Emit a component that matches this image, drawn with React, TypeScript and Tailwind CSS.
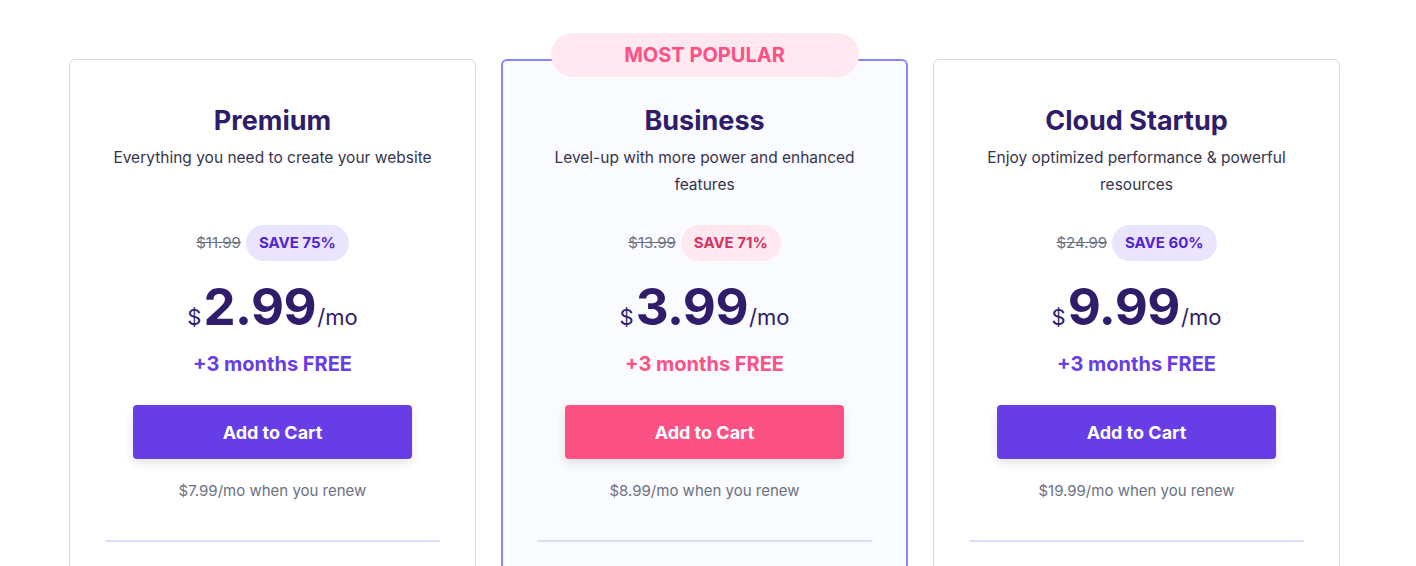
const plans = [
  {
    name: "Premium",
    desc: "Everything you need to create your website",
    oldPrice: "$11.99",
    save: "SAVE 75%",
    price: "2.99",
    renew: "$7.99/mo when you renew",
    popular: false,
  },
  {
    name: "Business",
    desc: "Level-up with more power and enhanced features",
    oldPrice: "$13.99",
    save: "SAVE 71%",
    price: "3.99",
    renew: "$8.99/mo when you renew",
    popular: true,
  },
  {
    name: "Cloud Startup",
    desc: "Enjoy optimized performance & powerful resources",
    oldPrice: "$24.99",
    save: "SAVE 60%",
    price: "9.99",
    renew: "$19.99/mo when you renew",
    popular: false,
  },
];

type Plan = (typeof plans)[number];

function PlanCard({ plan }: { plan: Plan }) {
  const p = plan.popular;
  return (
    <div
      className={
        p
          ? "relative rounded-[6px] border-2 border-[#8c85ff] bg-[#fafbff] px-[34px] pt-[42px] pb-[120px]"
          : "relative rounded-[6px] border border-[#dadce0] bg-white px-[35px] pt-[43px] pb-[120px]"
      }
    >
      {p && (
        <div className="absolute left-1/2 top-[-28px] flex h-[44px] w-[308px] -translate-x-1/2 items-center justify-center rounded-full bg-[#ffe8ef] text-[20px] font-bold text-[#fc5185]">
          MOST POPULAR
        </div>
      )}
      <div className="flex flex-col items-center text-center">
        <h2 className="text-[27px] font-bold leading-[36px] text-[#2f1c6a]">{plan.name}</h2>
        <p className="mt-[5px] min-h-[54px] max-w-[330px] text-[15.5px] leading-[27px] text-[#36344d]">{plan.desc}</p>
        <div className="mt-[27px] flex items-center gap-[5px]">
          <span className="text-[15px] text-[#6d7081] line-through">{plan.oldPrice}</span>
          <span
            className={
              p
                ? "flex h-[36px] items-center rounded-full bg-[#ffe8ef] px-[13px] text-[15px] font-bold text-[#d63163]"
                : "flex h-[36px] items-center rounded-full bg-[#ebe4ff] px-[13px] text-[15px] font-bold text-[#5025d1]"
            }
          >
            {plan.save}
          </span>
        </div>
        <div className="mt-[16px] flex h-[60px] items-baseline text-[#2f1c6a] leading-[60px]">
          <span className="mr-[2px] text-[22px]">$</span>
          <span className="text-[51px] font-bold tracking-[-0.5px]">{plan.price}</span>
          <span className="ml-[1px] text-[22px]">/mo</span>
        </div>
        <div className={p ? "mt-[13px] text-[20px] font-bold leading-[28px] text-[#fc5185]" : "mt-[13px] text-[20px] font-bold leading-[28px] text-[#673de6]"}>
          +3 months FREE
        </div>
        <button
          className={
            p
              ? "mt-[27px] h-[54px] w-[279px] rounded-[4px] bg-[#fc5185] text-[18px] font-bold text-white shadow-[0_4px_10px_rgba(29,30,32,0.12)]"
              : "mt-[27px] h-[54px] w-[279px] rounded-[4px] bg-[#673de6] text-[18px] font-bold text-white shadow-[0_4px_10px_rgba(29,30,32,0.12)]"
          }
        >
          Add to Cart
        </button>
        <p className="mt-[20px] text-[15px] leading-[24px] text-[#6d7081]">{plan.renew}</p>
      </div>
      <div className="mt-[37px] h-[2px] w-full bg-[#dae1f7]" />
    </div>
  );
}

export default function App() {
  return (
    <div className="h-[566px] overflow-hidden bg-white font-['Inter',sans-serif]">
      <div className="ml-[69px] grid w-[1271px] grid-cols-3 gap-[25px] pt-[59px]">
        {plans.map((plan) => (
          <PlanCard key={plan.name} plan={plan} />
        ))}
      </div>
    </div>
  );
}
